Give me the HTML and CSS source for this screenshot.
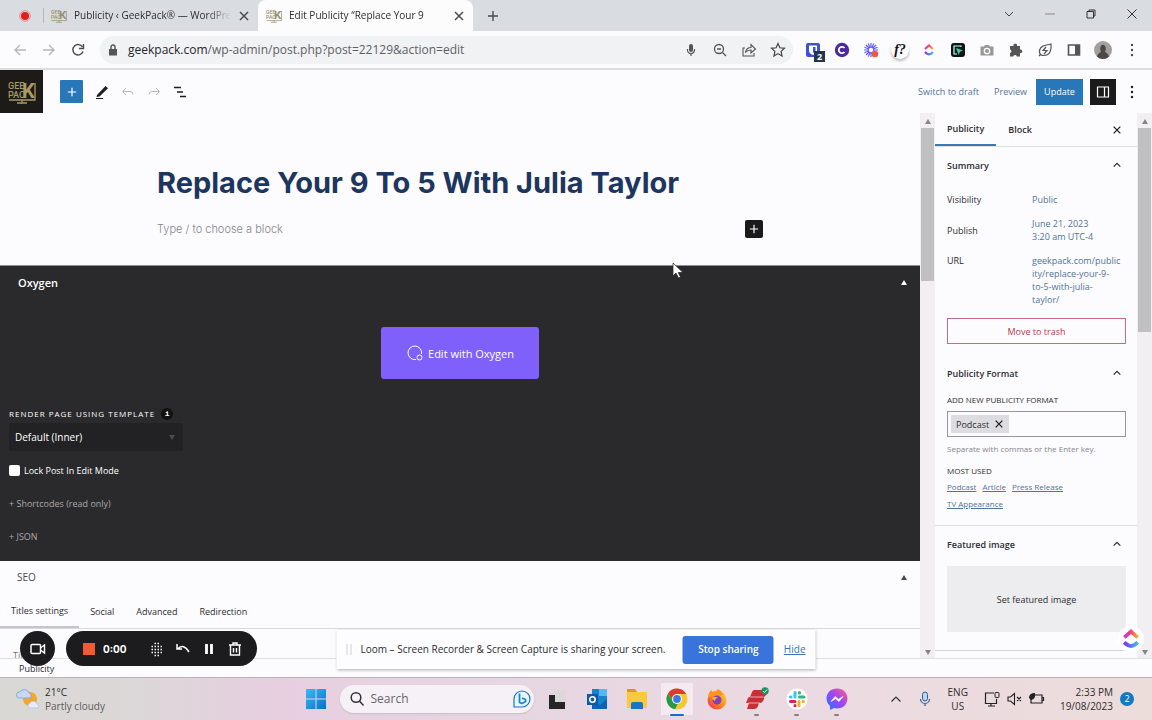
FILE: index.html
```html
<!DOCTYPE html>
<html lang="en">
<head>
    <meta charset="UTF-8">
    <meta name="viewport" content="width=device-width, initial-scale=1.0">
    <title>Edit Publicity "Replace Your 9 To 5 With Julia Taylor"</title>
    <link rel="stylesheet" href="styles.css">
</head>
<body>
    <!-- shared shapes -->
    <svg class="defs" aria-hidden="true">
        <defs>
            <linearGradient id="click-top" x1="0" x2="1"><stop offset="0" stop-color="#c23bd6"/><stop offset=".5" stop-color="#f5407c"/><stop offset="1" stop-color="#ffb42e"/></linearGradient>
            <linearGradient id="click-bottom" x1="0" x2="1"><stop offset="0" stop-color="#7a35f0"/><stop offset="1" stop-color="#43b9f5"/></linearGradient>
            <linearGradient id="win" x1="0" y1="0" x2="1" y2="1"><stop offset="0" stop-color="#35bdf0"/><stop offset="1" stop-color="#0a6fcb"/></linearGradient>
            <linearGradient id="msg" x1="0" y1="1" x2="1" y2="0"><stop offset="0" stop-color="#1e78ff"/><stop offset=".5" stop-color="#9a45fb"/><stop offset="1" stop-color="#ff6280"/></linearGradient>
            <linearGradient id="fox" x1="1" y1="0" x2="0" y2="1"><stop offset="0" stop-color="#ffe23a"/><stop offset=".5" stop-color="#ff8a1c"/><stop offset="1" stop-color="#f0265a"/></linearGradient>
        </defs>
        <symbol id="logo" viewBox="0 0 28 24">
            <g fill="currentColor" font-family="Roboto, sans-serif">
                <text x="0" y="9" font-size="9" font-weight="500">GEE</text>
                <text x="0" y="18" font-size="9" font-weight="500">PAC</text>
                <text x="14" y="18" font-size="20" font-weight="700">K</text>
            </g>
            <path d="M1 20h26V3M9 23h10M14 20v3" fill="none" stroke="currentColor" stroke-width="1.3"/>
        </symbol>
        <symbol id="close" viewBox="0 0 12 12"><path d="M2 2l8 8M10 2l-8 8" stroke="currentColor" stroke-width="1.5" fill="none"/></symbol>
        <symbol id="plus" viewBox="0 0 12 12"><path d="M6 1v10M1 6h10" stroke="currentColor" stroke-width="1.4" fill="none"/></symbol>
        <symbol id="chevron" viewBox="0 0 12 12"><path d="M2 8l4-4 4 4" stroke="currentColor" stroke-width="1.5" fill="none"/></symbol>
        <symbol id="dots" viewBox="0 0 18 18"><g fill="currentColor"><circle cx="9" cy="4" r="1.2"/><circle cx="9" cy="9" r="1.2"/><circle cx="9" cy="14" r="1.2"/></g></symbol>
        <symbol id="clickup" viewBox="0 0 24 24">
            <path d="M4 10l8-7 8 7" fill="none" stroke="url(#click-top)" stroke-width="4.5"/>
            <path d="M4 16q8 9 16 0" fill="none" stroke="url(#click-bottom)" stroke-width="4.5"/>
        </symbol>
    </svg>

    <header class="tabstrip">
        <svg class="record" viewBox="0 0 12 12"><circle cx="6" cy="6" r="5.3" fill="none" stroke="#e58b88"/><circle cx="6" cy="6" r="4" fill="#e0201b"/></svg>
        <div class="tab">
            <svg class="favicon"><use href="#logo"/></svg>
            <span class="tab-title">Publicity ‹ GeekPack® — WordPress</span>
            <button class="icon-btn" aria-label="Close tab"><svg class="s12"><use href="#close"/></svg></button>
        </div>
        <div class="tab tab-active">
            <svg class="favicon"><use href="#logo"/></svg>
            <span class="tab-title">Edit Publicity “Replace Your 9</span>
            <button class="icon-btn" aria-label="Close tab"><svg class="s12"><use href="#close"/></svg></button>
        </div>
        <button class="icon-btn new-tab" aria-label="New tab"><svg class="s12"><use href="#plus"/></svg></button>
        <div class="window-buttons">
            <button class="icon-btn" aria-label="Search tabs"><svg class="s12" viewBox="0 0 12 12"><path d="M2 4l4 4 4-4" fill="none" stroke="#444"/></svg></button>
            <button class="icon-btn" aria-label="Minimize"><svg class="s12" viewBox="0 0 12 12"><path d="M1 6h10" stroke="#888"/></svg></button>
            <button class="icon-btn" aria-label="Restore"><svg class="s12" viewBox="0 0 12 12"><path d="M2 3.5h6.5V10H2zM4 3.5V2h6v6H8.500" fill="none" stroke="#333"/></svg></button>
            <button class="icon-btn" aria-label="Close"><svg class="s12" viewBox="0 0 12 12"><path d="M1.5 1.5l9 9M10.5 1.5l-9 9" stroke="#333"/></svg></button>
        </div>
    </header>

    <nav class="toolbar">
        <button class="icon-btn faded" aria-label="Back"><svg class="s18" viewBox="0 0 18 18"><path d="M15 9H4M9 4L4 9l5 5" fill="none" stroke="currentColor" stroke-width="1.4"/></svg></button>
        <button class="icon-btn faded" aria-label="Forward"><svg class="s18" viewBox="0 0 18 18"><path d="M3 9h11M9 4l5 5-5 5" fill="none" stroke="currentColor" stroke-width="1.4"/></svg></button>
        <button class="icon-btn" aria-label="Reload"><svg class="s18" viewBox="0 0 18 18"><path d="M13.5 6A5.2 5.2 0 1 0 14 10.5M14.5 3v4.5H10" fill="none" stroke="currentColor" stroke-width="1.4"/></svg></button>
        <div class="address">
            <svg class="s12" viewBox="0 0 12 12"><path d="M2 5h8v6.5H2z" fill="#555"/><path d="M4 5V3a2 2 0 0 1 4 0v2" fill="none" stroke="#555" stroke-width="1.4"/></svg>
            <p class="url"><b>geekpack.com</b>/wp-admin/post.php?post=22129&amp;action=edit</p>
            <div class="icons">
                <svg class="s18" viewBox="0 0 18 18"><rect x="7" y="3" width="4" height="8" rx="2" fill="#555"/><path d="M5.5 8v1a3.5 3.5 0 0 0 7 0V8M9 12.5V15" fill="none" stroke="#555" stroke-width="1.2"/></svg>
                <svg class="s18" viewBox="0 0 18 18"><circle cx="8" cy="8" r="4.5" fill="none" stroke="#555" stroke-width="1.3"/><path d="M11.5 11.5L15 15M6 8h4" stroke="#555" stroke-width="1.3"/></svg>
                <svg class="s18" viewBox="0 0 18 18"><path d="M5 7H3v8h11v-3M5.5 11.5c.5-3 2.5-5 5.5-5V3.5L15.5 8 11 12V9c-2.500 0-4 .6-5.500 2.500z" fill="none" stroke="#555" stroke-width="1.1"/></svg>
                <svg class="s18" viewBox="0 0 18 18"><path d="M9 2.5l1.9 4.3 4.6.5-3.4 3.1.9 4.6-4-2.400L5 15l.9-4.600-3.400-3.100 4.600-.5z" fill="none" stroke="#444" stroke-width="1.2"/></svg>
            </div>
        </div>
        <div class="icons">
            <span class="vault"><svg class="s18" viewBox="0 0 18 18"><rect x="2" y="2" width="14" height="14" rx="2" fill="#3f51d2"/><path d="M5 4.5h8v5q0 3-4 4.5-4-1.500-4-4.500z" fill="#fff"/><path d="M9 6h2.5v3.5q0 1-2.500 2.500z" fill="#3f51d2"/></svg><i>2</i></span>
            <svg class="s18" viewBox="0 0 18 18"><circle cx="9" cy="9" r="7.2" fill="#4c2a9d"/><path d="M11.5 7A3.2 3.2 0 1 0 11.5 11" fill="none" stroke="#fff" stroke-width="1.8"/></svg>
            <svg class="s18" viewBox="0 0 18 18"><path d="M9 2v14M2 9h14M4 4l10 10M14 4L4 14M6.3 2.5l5.4 13M2.500 6.300l13 5.400M11.700 2.500l-5.400 13M15.500 6.300l-13 5.400" stroke="#625df5" stroke-width="1.2"/><circle cx="9" cy="9" r="2.2" fill="#fff"/><circle cx="13" cy="13" r="3.3" fill="#f05a35"/></svg>
            <span class="whatfont">f?</span>
            <svg class="s18 pad"><use href="#clickup"/></svg>
            <svg class="s18" viewBox="0 0 18 18"><rect x="2" y="2" width="14" height="14" rx="3" fill="#0b1717"/><path d="M12 6V5H5v8h3" fill="none" stroke="#cfe" stroke-width="1.2"/><path d="M7 7l7 2.5-3 1.3L9.7 14z" fill="#35d0a5"/></svg>
            <svg class="s18" viewBox="0 0 18 18"><path d="M2.5 5.5H6L7 4h4l1 1.5h3.5v9h-13z" fill="#999"/><circle cx="9" cy="10" r="2.7" fill="#999" stroke="#fff" stroke-width="1.3"/></svg>
            <svg class="s18" viewBox="0 0 18 18"><path d="M3 5h3.500a1.800 1.800 0 1 1 3.500 0H13v3.500a1.800 1.800 0 1 1 0 3.500v3.500H9.800a1.800 1.800 0 0 0-3.500 0H3v-3.500a1.800 1.800 0 0 0 0-3.500z" fill="#555"/></svg>
            <svg class="s18" viewBox="0 0 18 18"><path d="M15 3c.5 8-2 11.5-7 11.5-5.500 0-5.500-5-3-8C7 4 10 4.500 15 3zM3 15l2-2M10 6l-3 3.500h4L8 13" fill="none" stroke="#555" stroke-width="1.2"/></svg>
            <svg class="s18" viewBox="0 0 18 18"><path d="M3.5 4h11v10h-11z" fill="none" stroke="#555" stroke-width="1.6"/><path d="M10 4h5v10h-5z" fill="#555"/></svg>
            <svg class="s18" viewBox="0 0 18 18"><circle cx="9" cy="9" r="9" fill="#a3a09d"/><path d="M3 15.7c1-4 3-4 4-5-2-4 0-7 2-7s4 3 2 7c1 1 3 1 4 5a9 9 0 0 1-12 0z" fill="#4c4a49"/></svg>
            <svg class="s18"><use href="#dots"/></svg>
        </div>
    </nav>

    <div class="editor-header">
        <a class="site-logo" href="#" aria-label="GeekPack"><svg><use href="#logo"/></svg></a>
        <button class="inserter" aria-label="Add block"><svg class="s10"><use href="#plus"/></svg></button>
        <button class="icon-btn dark" aria-label="Edit"><svg class="s18" viewBox="0 0 18 18"><path d="M4 12l8.5-9L15 5.3 6.5 13.5 3.5 14z" fill="currentColor"/><path d="M3 15.5h7" stroke="currentColor"/></svg></button>
        <button class="icon-btn faded" aria-label="Undo"><svg class="s18" viewBox="0 0 18 18"><path d="M7 5L3.5 8.5 7 12M4 8.5h7q3 0 3 3" fill="none" stroke="currentColor"/></svg></button>
        <button class="icon-btn faded" aria-label="Redo"><svg class="s18" viewBox="0 0 18 18"><path d="M11 5l3.5 3.5L11 12M14 8.5H7q-3 0-3 3" fill="none" stroke="currentColor"/></svg></button>
        <button class="icon-btn dark" aria-label="Document overview"><svg class="s18" viewBox="0 0 18 18"><path d="M3 4.5h7M6 9h6M9 13.5h6" stroke="currentColor" stroke-width="1.3"/></svg></button>
        <div class="editor-actions">
            <div class="links">
                <a href="#">Switch to draft</a>
                <a href="#">Preview</a>
            </div>
            <button class="update">Update</button>
            <button class="settings" aria-label="Settings"><svg class="s18" viewBox="0 0 18 18"><path d="M3.5 4h11v10h-11zM10.5 4v10" fill="none" stroke="#fff" stroke-width="1.2"/></svg></button>
            <button class="icon-btn dark" aria-label="Options"><svg class="s18"><use href="#dots"/></svg></button>
        </div>
    </div>

    <div class="workspace">
        <main class="canvas">
            <section class="post">
                <h1>Replace Your 9 To 5 With Julia Taylor</h1>
                <div class="block">
                    <p>Type / to choose a block</p>
                    <button aria-label="Add block"><svg class="s10"><use href="#plus"/></svg></button>
                </div>
            </section>
            <section class="oxygen">
                <div class="box-head"><h2>Oxygen</h2><span class="up"></span></div>
                <button class="edit-oxygen">
                    <svg class="s18" viewBox="0 0 18 18"><path d="M10 15.5A6.8 6.8 0 1 1 15.5 10" fill="none" stroke="#fff"/><circle cx="13.5" cy="13.5" r="2.5" fill="none" stroke="#fff"/></svg>
                    Edit with Oxygen
                </button>
                <label class="template-label" for="template">Render page using template <i>i</i></label>
                <div class="select-wrap">
                    <select id="template"><option>Default (Inner)</option></select>
                    <span class="down"></span>
                </div>
                <label class="lock"><input type="checkbox"> Lock Post In Edit Mode</label>
                <a class="toggle" href="#">+ Shortcodes (read only)</a>
                <a class="toggle" href="#">+ JSON</a>
            </section>
            <section class="seo">
                <div class="box-head"><h2>SEO</h2><span class="up"></span></div>
                <div class="seo-tabs">
                    <button class="on">Titles settings</button>
                    <button>Social</button>
                    <button>Advanced</button>
                    <button>Redirection</button>
                </div>
                <p>Title</p>
            </section>
        </main>
        <div class="scrollbar"><span class="up"></span><span class="thumb"></span><span class="down"></span></div>
        <aside class="sidebar">
            <div class="side-tabs">
                <button class="on">Publicity</button>
                <button>Block</button>
                <button class="icon-btn dark" aria-label="Close settings"><svg class="s10"><use href="#close"/></svg></button>
            </div>
            <section class="panel">
                <h2>Summary <svg class="s10"><use href="#chevron"/></svg></h2>
                <dl class="summary">
                    <dt>Visibility</dt><dd><a href="#">Public</a></dd>
                    <dt>Publish</dt><dd><a href="#">June 21, 2023<br>3:20 am UTC-4</a></dd>
                    <dt>URL</dt><dd><a href="#">geekpack.com/public<br>ity/replace-your-9-<br>to-5-with-julia-<br>taylor/</a></dd>
                </dl>
                <button class="trash">Move to trash</button>
            </section>
            <section class="panel format">
                <h2>Publicity Format <svg class="s10"><use href="#chevron"/></svg></h2>
                <label for="format">Add new publicity format</label>
                <div class="tokens">
                    <span class="token">Podcast <button class="icon-btn dark" aria-label="Remove Podcast"><svg class="s10"><use href="#close"/></svg></button></span>
                    <input id="format" type="text">
                </div>
                <p class="help">Separate with commas or the Enter key.</p>
                <h3>Most used</h3>
                <p class="used"><a href="#">Podcast</a> <a href="#">Article</a> <a href="#">Press Release</a> <a href="#">TV Appearance</a></p>
            </section>
            <section class="panel featured">
                <h2>Featured image <svg class="s10"><use href="#chevron"/></svg></h2>
                <button>Set featured image</button>
            </section>
        </aside>
        <div class="scrollbar long"><span class="up"></span><span class="thumb"></span><span class="down"></span></div>
    </div>

    <footer class="breadcrumb">Publicity</footer>

    <div class="taskbar">
        <div class="weather">
            <svg viewBox="0 0 24 24"><circle cx="14" cy="12" r="7" fill="#f4a62a"/><path d="M3 11a3 3 0 0 1 1-6 5 5 0 0 1 9 1 3 3 0 0 1 1 5z" fill="#c9d8f6" stroke="#86a8ea"/><path d="M13 21a3 3 0 0 1 1-5 4 4 0 0 1 7 1 2 2 0 0 1 0 4z" fill="#e6ebf8" stroke="#b9c9ee"/></svg>
            <p>21°C<br><span>Partly cloudy</span></p>
        </div>
        <div class="apps">
            <svg class="s24" viewBox="0 0 24 24"><path d="M2 2h9.5v9.5H2zM12.5 2H22v9.5h-9.5zM2 12.5h9.5V22H2zM12.5 12.5H22V22h-9.5z" fill="url(#win)"/></svg>
            <label class="search">
                <svg class="s18" viewBox="0 0 18 18"><circle cx="8" cy="7.5" r="4.8" fill="none" stroke="#333" stroke-width="1.5"/><path d="M11.5 11l4 4.5" stroke="#333" stroke-width="1.5"/></svg>
                <input type="text" placeholder="Search" aria-label="Search">
                <svg class="s20" viewBox="0 0 20 20"><path d="M2 18V10a8 8 0 1 1 8 8z" fill="#eef6fd" stroke="#1a73c9" stroke-width="1.2"/><path d="M7.5 4.5v9l2.5 1 3.5-2v-2L10 9" fill="none" stroke="#1389d6" stroke-width="1.8"/></svg>
            </label>
            <svg class="s24" viewBox="0 0 24 24"><path d="M9 3h12v13H9z" fill="#ddd8da"/><path d="M4 8h6v7h10v7H4z" fill="#272627"/></svg>
            <svg class="s24" viewBox="0 0 24 24"><path d="M7 2h15v20H7z" fill="#1683cf"/><path d="M14 2h8v7h-8z" fill="#4bbdf0"/><path d="M7 13l8 5 7-6v10H7z" fill="#0b64b8"/><path d="M2 7h11v11H2z" fill="#0f5aa8"/><circle cx="7.5" cy="12.5" r="2.7" fill="none" stroke="#fff" stroke-width="1.6"/></svg>
            <svg class="s24" viewBox="0 0 24 24"><path d="M2 2h8l2 3h10v16H2z" fill="#f9c83d"/><path d="M2 2h8l2 3H2z" fill="#d99b1c"/><path d="M6 22v-5q0-2 2-2h8q2 0 2 2v5z" fill="#1976c5"/></svg>
            <span class="app current"><svg class="s24" viewBox="0 0 24 24"><circle cx="12" cy="12" r="10.5" fill="#f8c72d"/><path d="M3 6.5a10.5 10.5 0 0 1 18.2.5H12L8 14z" fill="#df3a2d"/><path d="M3 6.5L9 16l4 .5-3 5.8A10.5 10.5 0 0 1 3 6.5z" fill="#249b4b"/><circle cx="12" cy="12" r="5" fill="#fff"/><circle cx="12" cy="12" r="3.9" fill="#367de0"/></svg></span>
            <svg class="s24" viewBox="0 0 24 24"><circle cx="12" cy="13" r="9.5" fill="url(#fox)"/><path d="M3 10q0-4 3-7l2 3q4-2 5-4 4 2 5 6z" fill="#ff941f"/><circle cx="12" cy="13" r="4.5" fill="#8243b5"/><path d="M7 11q3-2 6 0-3 0-3 3-2-1-3-3z" fill="#ffb52c"/></svg>
            <span class="app"><svg class="s24" viewBox="0 0 24 24"><path d="M9 3h12q2 0 1 3l-1 2q-1 2-3 2H5l2-5q1-2 2-2zM4 10h13q3 0 2 2l-1 2q-1 2-3 2H1l2-5zM4 16h10l-1 3q-1 3-4 3H2z" fill="#c92e35"/><path d="M5 10h13M3 16h12" stroke="#f0cdd0" stroke-width=".8"/><circle cx="20" cy="4" r="3.7" fill="#19935f"/><path d="M18 4l1.5 1.5L22 2.500" fill="none" stroke="#fff"/></svg></span>
            <span class="app"><svg class="s24" viewBox="0 0 24 24"><circle cx="12" cy="12" r="10.5" fill="#fff"/><g stroke-width="3" stroke-linecap="round" fill="none"><path d="M10 5.5v4.5M5.5 10h.5" stroke="#36c5f0"/><path d="M14.5 10h4.5M14.5 5.5v.5" stroke="#2eb67d"/><path d="M14 14.5v4M18 14.5h.5" stroke="#ecb22e"/><path d="M5.5 14.5h4.5M10 18.5v.3" stroke="#e01e5a"/></g></svg></span>
            <span class="app"><svg class="s24" viewBox="0 0 24 24"><path d="M12 1.5c6 0 10.5 4 10.5 10S18 21.5 12 21.5l-3-.4L5 23v-4C3 17 1.500 15 1.500 11.500c0-6 4.500-10 10.500-10z" fill="url(#msg)"/><path d="M6 14.5l4-5 3.5 2.7L18 9.500l-4 5-3.500-2.700z" fill="#fff" stroke="#fff" stroke-width=".6"/></svg></span>
        </div>
        <div class="tray">
            <svg class="s18" viewBox="0 0 18 18"><path d="M4.5 11.5L9 7l4.5 4.5" fill="none" stroke="#333" stroke-width="1.2"/></svg>
            <svg class="s18" viewBox="0 0 18 18"><rect x="6.5" y="2" width="5" height="9" rx="2.5" fill="#bcd4ec" stroke="#315e94"/><path d="M4.5 9a4.5 4.5 0 0 0 9 0M9 13.5V16" fill="none" stroke="#315e94" stroke-width="1.2"/></svg>
            <p class="lang">ENG<br>US</p>
            <div class="status">
                <svg class="s18" viewBox="0 0 18 18"><path d="M11 3H2.5v10.5h11V9M5 16h7M8 13.5V16" fill="none" stroke="#222" stroke-width="1.2"/><rect x="12" y="2.5" width="4" height="5" rx="1" fill="none" stroke="#222"/></svg>
                <svg class="s18" viewBox="0 0 18 18"><path d="M3 7h2.5L9.5 3.5v11L5.5 11H3zM12 7l4 4M16 7l-4 4" fill="none" stroke="#222" stroke-width="1.1"/></svg>
                <svg class="s18" viewBox="0 0 18 18"><path d="M8 5h7v8H4V9M15 7.5h1.5v3H15" fill="none" stroke="#222" stroke-width="1.2"/><path d="M2 8q0-5 6-5 1 6-4 7l-2-2z" fill="#222"/></svg>
            </div>
            <p class="clock">2:33 PM<br>19/08/2023</p>
            <span class="notice">2</span>
        </div>
    </div>

    <!-- floating on top of the page -->
    <button class="loom-camera" aria-label="Camera"><svg class="s18" viewBox="0 0 18 18"><rect x="2" y="4.5" width="9.5" height="9" rx="1" fill="none" stroke="#fff" stroke-width="1.5"/><path d="M11.5 8l4-3v8l-4-3" fill="none" stroke="#fff" stroke-width="1.4"/></svg></button>
    <div class="loom-bar">
        <button class="stop" aria-label="Stop"></button>
        <span class="time">0:00</span>
        <button class="icon-btn" aria-label="Effects"><svg class="s18" viewBox="0 0 18 18"><path d="M6.5 3.5h5M3.5 6.5h11M3.5 9.5h11M3.5 12.5h11M6.5 15.5h5" stroke="#fff" stroke-width="1.5" stroke-dasharray="1.5 1.5"/></svg></button>
        <button class="icon-btn" aria-label="Restart"><svg class="s18" viewBox="0 0 18 18"><path d="M3 4v5h5M3.5 9q6-6 11.5 3" fill="none" stroke="#fff" stroke-width="1.5"/></svg></button>
        <button class="icon-btn" aria-label="Pause"><svg class="s18" viewBox="0 0 18 18"><path d="M6.5 4v10M11.5 4v10" stroke="#fff" stroke-width="2.8"/></svg></button>
        <button class="icon-btn" aria-label="Delete"><svg class="s18" viewBox="0 0 18 18"><path d="M3 5h12M7 5V3h4v2M4.5 5v10h9V5M7.5 8v4.5M10.5 8v4.5" fill="none" stroke="#fff" stroke-width="1.4"/></svg></button>
    </div>
    <div class="share-bar">
        <span class="grip"></span>
        <p>Loom – Screen Recorder &amp; Screen Capture is sharing your screen.</p>
        <button>Stop sharing</button>
        <a href="#">Hide</a>
    </div>
    <button class="clickup" aria-label="ClickUp"><svg class="s20"><use href="#clickup"/></svg></button>
    <svg class="cursor" viewBox="0 0 12 18"><path d="M1 1v13l3-3 2.5 5 2-1-2.300-4.500H11z" fill="#fff" stroke="#222" stroke-width=".7"/></svg>
</body>
</html>
```
FILE: styles.css
```css
* {
    margin: 0;
    padding: 0;
    box-sizing: border-box;
}
body {
    display: flex;
    flex-direction: column;
    position: relative;
    height: 100vh;
    overflow: hidden;
    background: #fcfbfd;
    color: #2c2d30;
    font-family: "Open Sans", "Noto Sans", sans-serif;
    font-size: 9px;
    line-height: 13px;
}
button, input, select {
    border: 0;
    background: none;
    color: inherit;
    font: inherit;
}
a {
    color: #50749b;
    text-decoration: none;
}
i {
    font-style: normal;
}
svg {
    display: block;
    flex-shrink: 0;
}
.defs {
    position: absolute;
    width: 0;
    height: 0;
}
.s10 { width: 10px; height: 10px; }
.s12 { width: 12px; height: 12px; }
.s18 { width: 18px; height: 18px; }
.s20 { width: 20px; height: 20px; }
.s24 { width: 24px; height: 24px; }
.pad { padding: 3px; }
.icon-btn {
    display: flex;
    align-items: center;
    justify-content: center;
    color: #4a4b4e;
}
.dark { color: #1e1e1e; }
.faded { color: #b5b6b8; }

/* browser tabs */
.tabstrip {
    display: flex;
    align-items: center;
    height: 31px;
    padding: 0 14px 0 19px;
    background: #d9dde2;
    flex-shrink: 0;
}
.record {
    width: 12px;
    height: 12px;
    margin-right: 12px;
}
.tab {
    display: flex;
    align-items: center;
    gap: 7px;
    width: 215px;
    height: 31px;
    padding: 0 8px 0 10px;
    font-size: 10px;
}
.tab::before {
    content: "";
    height: 15px;
    margin-left: -10px;
    border-left: 1px solid #b3b6ba;
}
.tab-active {
    background: #fdfcfd;
    border-radius: 8px 8px 0 0;
}
.tab-active::before {
    border-color: transparent;
}
.favicon {
    width: 16px;
    height: 14px;
    color: #99906f;
}
.tab-title {
    flex: 1;
    overflow: hidden;
    white-space: nowrap;
    mask-image: linear-gradient(90deg, #000 85%, transparent);
}
.new-tab {
    margin-left: 14px;
}
.window-buttons {
    display: flex;
    gap: 29px;
    margin-left: auto;
    padding-bottom: 4px;
}

/* address bar */
.toolbar {
    display: flex;
    align-items: center;
    gap: 11px;
    height: 39px;
    padding: 0 11px;
    border-bottom: 2px solid #dddde0;
    flex-shrink: 0;
}
.address {
    display: flex;
    align-items: center;
    flex: 1;
    gap: 9px;
    height: 28px;
    margin-left: 2px;
    padding: 0 6px 0 7px;
    border-radius: 14px;
    background: #f1f2f4;
}
.url {
    flex: 1;
    color: #5e6164;
    font-size: 12px;
}
.url b {
    color: #25272a;
    font-weight: 400;
}
.icons {
    display: flex;
    align-items: center;
    gap: 11px;
    color: #4a4b4e;
}
.vault {
    position: relative;
}
.vault i {
    position: absolute;
    right: -3px;
    bottom: -3px;
    width: 11px;
    height: 11px;
    background: #24364c;
    color: #fff;
    font-weight: 700;
    line-height: 11px;
    text-align: center;
}
.whatfont {
    width: 18px;
    border-radius: 50%;
    box-shadow: 0 2px 3px #bbb;
    color: #111;
    font: italic bold 14px/18px "Liberation Serif", serif;
    text-align: center;
}

/* editor header */
.editor-header {
    display: flex;
    align-items: center;
    gap: 8px;
    height: 43px;
    padding-right: 11px;
    flex-shrink: 0;
}
.site-logo {
    display: flex;
    align-items: center;
    justify-content: center;
    width: 43px;
    height: 43px;
    margin-right: 9px;
    background: #1c1b18;
    color: #a99a66;
}
.site-logo svg {
    width: 28px;
    height: 24px;
}
.inserter {
    display: flex;
    align-items: center;
    justify-content: center;
    width: 23px;
    height: 23px;
    margin-right: 2px;
    border-radius: 1px;
    background: #2878b9;
    color: #fff;
}
.editor-actions {
    display: flex;
    align-items: center;
    gap: 7px;
    margin-left: auto;
}
.links {
    display: flex;
    gap: 15px;
    margin-right: 2px;
}
.update {
    width: 47px;
    height: 26px;
    background: #2878b9;
    color: #fff;
}
.settings {
    display: flex;
    align-items: center;
    justify-content: center;
    width: 26px;
    height: 26px;
    background: #1b1b1b;
}

/* workspace */
.workspace {
    display: flex;
    flex: 1;
    min-height: 0;
    border-bottom: 1px solid #dedee0;
}
.canvas {
    flex: 1;
    min-width: 0;
    overflow: hidden;
}
.post {
    height: 152px;
    padding: 50px 157px 0;
}
.post h1 {
    color: #1d3660;
    font: 700 29px/40px Inter, sans-serif;
    white-space: nowrap;
}
.block {
    display: flex;
    align-items: center;
    justify-content: space-between;
    margin-top: 17px;
    color: #85858a;
    font-family: Inter, sans-serif;
    font-size: 11px;
    font-weight: 300;
}
.block button {
    display: flex;
    align-items: center;
    justify-content: center;
    width: 18px;
    height: 18px;
    border-radius: 2px;
    background: #1a1a1a;
    color: #fff;
}
.oxygen {
    display: flex;
    flex-direction: column;
    align-items: flex-start;
    padding: 0 9px 18px;
    border-top: 1px solid #8e8e90;
    background: #2a292b;
    color: #fff;
}
.box-head {
    display: flex;
    align-items: center;
    justify-content: space-between;
    align-self: stretch;
    height: 33px;
    padding: 0 4px 0 9px;
}
.box-head h2 {
    font-size: 11px;
    font-weight: 600;
}
.up, .down {
    border: 3px solid transparent;
    border-top: 0;
    border-bottom: 5px solid currentColor;
}
.down {
    border-top: 5px solid currentColor;
    border-bottom: 0;
}
.edit-oxygen {
    display: flex;
    align-items: center;
    justify-content: center;
    align-self: center;
    gap: 4px;
    width: 158px;
    height: 52px;
    margin: 28px 0;
    border-radius: 3px;
    background: #7f60fa;
    font-size: 11px;
}
.template-label {
    display: flex;
    align-items: center;
    gap: 6px;
    font-size: 8px;
    letter-spacing: 1px;
    text-transform: uppercase;
}
.template-label i {
    width: 12px;
    border-radius: 50%;
    background: #111;
    font-family: "Liberation Mono", monospace;
    font-weight: 700;
    letter-spacing: 0;
    line-height: 12px;
    text-align: center;
    text-transform: none;
}
.select-wrap {
    display: flex;
    align-items: center;
    width: 174px;
    height: 28px;
    margin: 3px 0 13px;
    padding-right: 8px;
    border-radius: 3px;
    background: #222123;
    color: #4c4b4e;
}
.select-wrap select {
    flex: 1;
    padding: 0 6px;
    appearance: none;
    color: #fff;
    font-size: 10px;
}
.lock {
    display: flex;
    align-items: center;
    gap: 4px;
    margin-bottom: 20px;
}
.lock input {
    width: 11px;
    height: 11px;
    appearance: none;
    border-radius: 2px;
    background: #fff;
}
.toggle + .toggle {
    margin-top: 20px;
}
.toggle {
    color: #aaa9ab;
}
.seo .box-head {
    padding: 0 13px 0 17px;
    color: #4a4a4d;
}
.seo .box-head h2 {
    font-size: 10px;
    font-weight: 400;
}
.seo-tabs {
    display: flex;
    height: 35px;
    border-bottom: 1px solid #d9d9dc;
}
.seo-tabs button {
    padding: 0 11px;
}
.seo-tabs .on {
    border-bottom: 2px solid #c6c6ca;
}
.seo p {
    padding: 20px 13px;
    color: #777;
}

/* scrollbars */
.scrollbar {
    display: flex;
    flex-direction: column;
    align-items: center;
    width: 15px;
    padding: 6px 1px 3px;
    background: #f1eff2;
    color: #858588;
    flex-shrink: 0;
}
.thumb {
    align-self: stretch;
    height: 153px;
    margin: 4px 0 auto;
    background: #c0bfc1;
}
.long .thumb {
    height: 204px;
}

/* settings sidebar */
.sidebar {
    width: 202px;
    overflow: hidden;
    flex-shrink: 0;
}
.side-tabs {
    display: flex;
    height: 34px;
    padding-right: 15px;
    border-bottom: 1px solid #dddde0;
}
.side-tabs button {
    padding: 0 12px;
    font-weight: 600;
}
.side-tabs .on {
    border-bottom: 2px solid #3c79b0;
}
.side-tabs .icon-btn {
    margin-left: auto;
    padding: 0;
}
.panel {
    padding: 0 11px 0 12px;
}
.panel h2 {
    display: flex;
    align-items: center;
    justify-content: space-between;
    height: 36px;
    padding-right: 4px;
    font-size: 9px;
    font-weight: 600;
}
.summary {
    display: grid;
    grid-template-columns: 85px 1fr;
    gap: 11px 0;
    align-items: center;
    padding-top: 10px;
}
.summary dt:last-of-type {
    align-self: start;
}
.trash {
    width: 100%;
    height: 26px;
    margin: 12px 0 11px;
    border: 1px solid #c57078;
    color: #b33f49;
}
.format {
    padding-bottom: 15px;
    border-bottom: 1px solid #dddde0;
}
.format label, .format h3 {
    display: block;
    font-size: 8px;
    font-weight: 500;
    text-transform: uppercase;
}
.format label {
    margin: 2px 0 5px;
}
.tokens {
    display: flex;
    align-items: center;
    height: 26px;
    padding: 0 3px;
    border: 1px solid #98989b;
}
.token {
    display: flex;
    align-items: center;
    gap: 5px;
    height: 18px;
    padding: 0 5px;
    background: #dddce0;
}
.tokens input {
    flex: 1;
    min-width: 0;
}
.help {
    margin: 5px 0 9px;
    color: #85858a;
    font-size: 8px;
}
.used {
    display: flex;
    flex-wrap: wrap;
    gap: 4px 6px;
    max-width: 150px;
    margin-top: 3px;
    font-size: 8px;
}
.used a {
    text-decoration: underline;
}
.featured {
    padding-bottom: 18px;
    border-bottom: 1px solid #d6d6d9;
}
.featured button {
    width: 100%;
    height: 66px;
    margin-top: 4px;
    background: #ededef;
}

.breadcrumb {
    height: 18px;
    padding: 3px 19px;
    flex-shrink: 0;
}

/* taskbar */
.taskbar {
    display: flex;
    align-items: center;
    height: 43px;
    padding: 0 18px 0 16px;
    border-top: 1px solid #b9b3b7;
    background: linear-gradient(90deg, #d9d8d4, #dcd7d8 12%, #e7cfe0 24%, #e6d6e2 45%, #ecdbe1 75%, #ecdcda);
    font-size: 10px;
    line-height: 14px;
    flex-shrink: 0;
}
.weather {
    display: flex;
    align-items: center;
    gap: 5px;
    width: 25%;
}
.weather svg {
    width: 24px;
    height: 24px;
}
.weather span {
    color: #5c5a5c;
}
.apps {
    display: flex;
    align-items: center;
    gap: 16px;
    margin-left: 8px;
}
.search {
    display: flex;
    align-items: center;
    gap: 5px;
    width: 194px;
    height: 28px;
    margin: 0 -5px 0 -4px;
    padding: 0 2px 0 8px;
    border-radius: 14px;
    background: #f6f1f6;
    box-shadow: 0 1px 2px #c8bcc6;
}
.search input {
    flex: 1;
    min-width: 0;
    font-size: 12px;
}
.search input::placeholder {
    color: #68666a;
}
.app::after {
    content: "";
    display: block;
    width: 5px;
    height: 2px;
    margin: 3px auto -5px;
    border-radius: 1px;
    background: #858085;
}
.current {
    background: #f5eaf2;
    box-shadow: 0 0 0 4px #f5eaf2;
}
.current::after {
    width: 14px;
    background: #1670b9;
}
.tray {
    display: flex;
    align-items: center;
    gap: 11px;
    margin-left: auto;
    text-align: center;
}
.lang {
    margin-left: 3px;
}
.status {
    display: flex;
    gap: 4px;
    margin-left: 4px;
}
.clock {
    margin-left: 4px;
    text-align: right;
}
.notice {
    width: 14px;
    margin-left: -4px;
    border-radius: 50%;
    background: #1279c4;
    color: #fff;
    font-size: 9px;
}

/* floating items */
.loom-camera, .loom-bar {
    display: flex;
    align-items: center;
    position: absolute;
    bottom: 54px;
    left: 20px;
    height: 35px;
    border-radius: 18px;
    background: #1c1b1d;
    color: #fff;
}
.loom-camera {
    justify-content: center;
    width: 35px;
}
.loom-bar {
    gap: 8px;
    left: 66px;
    width: 191px;
    padding: 0 13px 0 17px;
}
.stop {
    width: 12px;
    height: 12px;
    background: #f15b2f;
}
.time {
    margin-right: auto;
    font: 700 10px/14px Inter, sans-serif;
}
.share-bar {
    display: flex;
    align-items: center;
    position: absolute;
    bottom: 51px;
    left: 50%;
    width: 479px;
    height: 39px;
    padding: 0 10px;
    transform: translateX(-50%);
    background: #fdfcfe;
    box-shadow: 0 1px 3px #aaa;
    font-size: 10px;
}
.grip {
    width: 5px;
    height: 11px;
    margin-right: 9px;
    border: solid #cfcfd2;
    border-width: 0 1px;
}
.share-bar p {
    flex: 1;
    white-space: nowrap;
}
.share-bar button {
    width: 91px;
    height: 28px;
    margin-right: 10px;
    border-radius: 3px;
    background: #3974dc;
    color: #fff;
    font-weight: 600;
}
.share-bar a {
    color: #3974b8;
    text-decoration: underline;
}
.clickup {
    display: flex;
    align-items: center;
    justify-content: center;
    position: absolute;
    right: 8px;
    bottom: 68px;
    width: 26px;
    height: 26px;
    border-radius: 50%;
    background: #fff;
}
.cursor {
    position: absolute;
    top: 262px;
    left: 672px;
    width: 12px;
    height: 18px;
}
```
